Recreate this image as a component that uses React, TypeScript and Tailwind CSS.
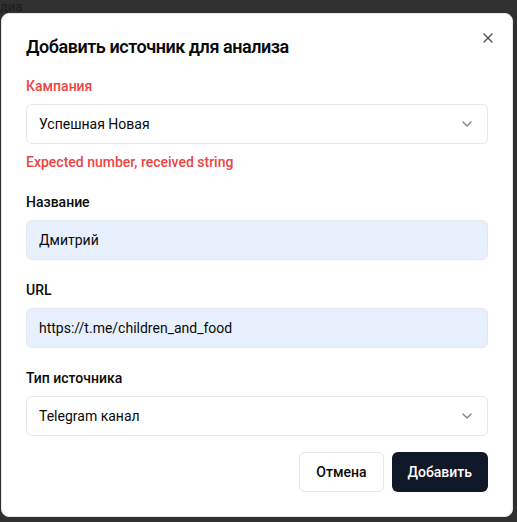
import React from "react";
import { X, ChevronDown } from "lucide-react";

function Label({ children, error }: { children: React.ReactNode; error?: boolean }) {
  return (
    <label
      className={
        "block text-[14px] font-medium leading-5 " +
        (error ? "text-[#ef4444]" : "text-[#0a0a0a]")
      }
    >
      {children}
    </label>
  );
}

function SelectBox({ value }: { value: string }) {
  return (
    <div className="flex h-10 w-full items-center justify-between rounded-md border border-[#e5e7eb] bg-white px-3 text-[14px] text-[#0a0a0a]">
      <span>{value}</span>
      <ChevronDown className="h-4 w-4 opacity-50" strokeWidth={2} />
    </div>
  );
}

function InputBox({ value }: { value: string }) {
  return (
    <div className="flex h-10 w-full items-center rounded-md border border-[#e5e7eb] bg-[#e8f0fe] px-3 text-[14px] text-[#0a0a0a]">
      {value}
    </div>
  );
}

export default function App() {
  return (
    <div className="h-[522px] w-[517px] overflow-hidden bg-[#303030] font-['Roboto',sans-serif]">
      <div className="h-[13px] text-[13px] leading-[13px] text-[#1c1c1c]">диа</div>
      <div className="relative ml-[1px] flex w-[512px] flex-col rounded-lg border border-[#e5e7eb] bg-white p-6">
        <h2 className="text-[18px] font-semibold leading-none tracking-tight text-[#0a0a0a]">
          Добавить источник для анализа
        </h2>
        <button className="absolute right-4 top-4 text-[#0a0a0a] opacity-70">
          <X className="h-4 w-4" strokeWidth={2} />
        </button>
        <div className="mt-5 flex flex-col gap-5">
          <div className="flex flex-col gap-2">
            <Label error>Кампания</Label>
            <SelectBox value="Успешная Новая" />
            <p className="text-[14px] font-medium leading-5 text-[#ef4444]">
              Expected number, received string
            </p>
          </div>
          <div className="flex flex-col gap-2">
            <Label>Название</Label>
            <InputBox value="Дмитрий" />
          </div>
          <div className="flex flex-col gap-2">
            <Label>URL</Label>
            <InputBox value="https://t.me/children_and_food" />
          </div>
          <div className="flex flex-col gap-2">
            <Label>Тип источника</Label>
            <SelectBox value="Telegram канал" />
          </div>
          <div className="-mt-1 flex justify-end gap-2">
            <button className="h-10 rounded-md border border-[#e5e7eb] bg-white px-4 text-[14px] font-medium text-[#0a0a0a]">
              Отмена
            </button>
            <button className="h-10 rounded-md bg-[#111827] px-4 text-[14px] font-medium text-white">
              Добавить
            </button>
          </div>
        </div>
      </div>
    </div>
  );
}
